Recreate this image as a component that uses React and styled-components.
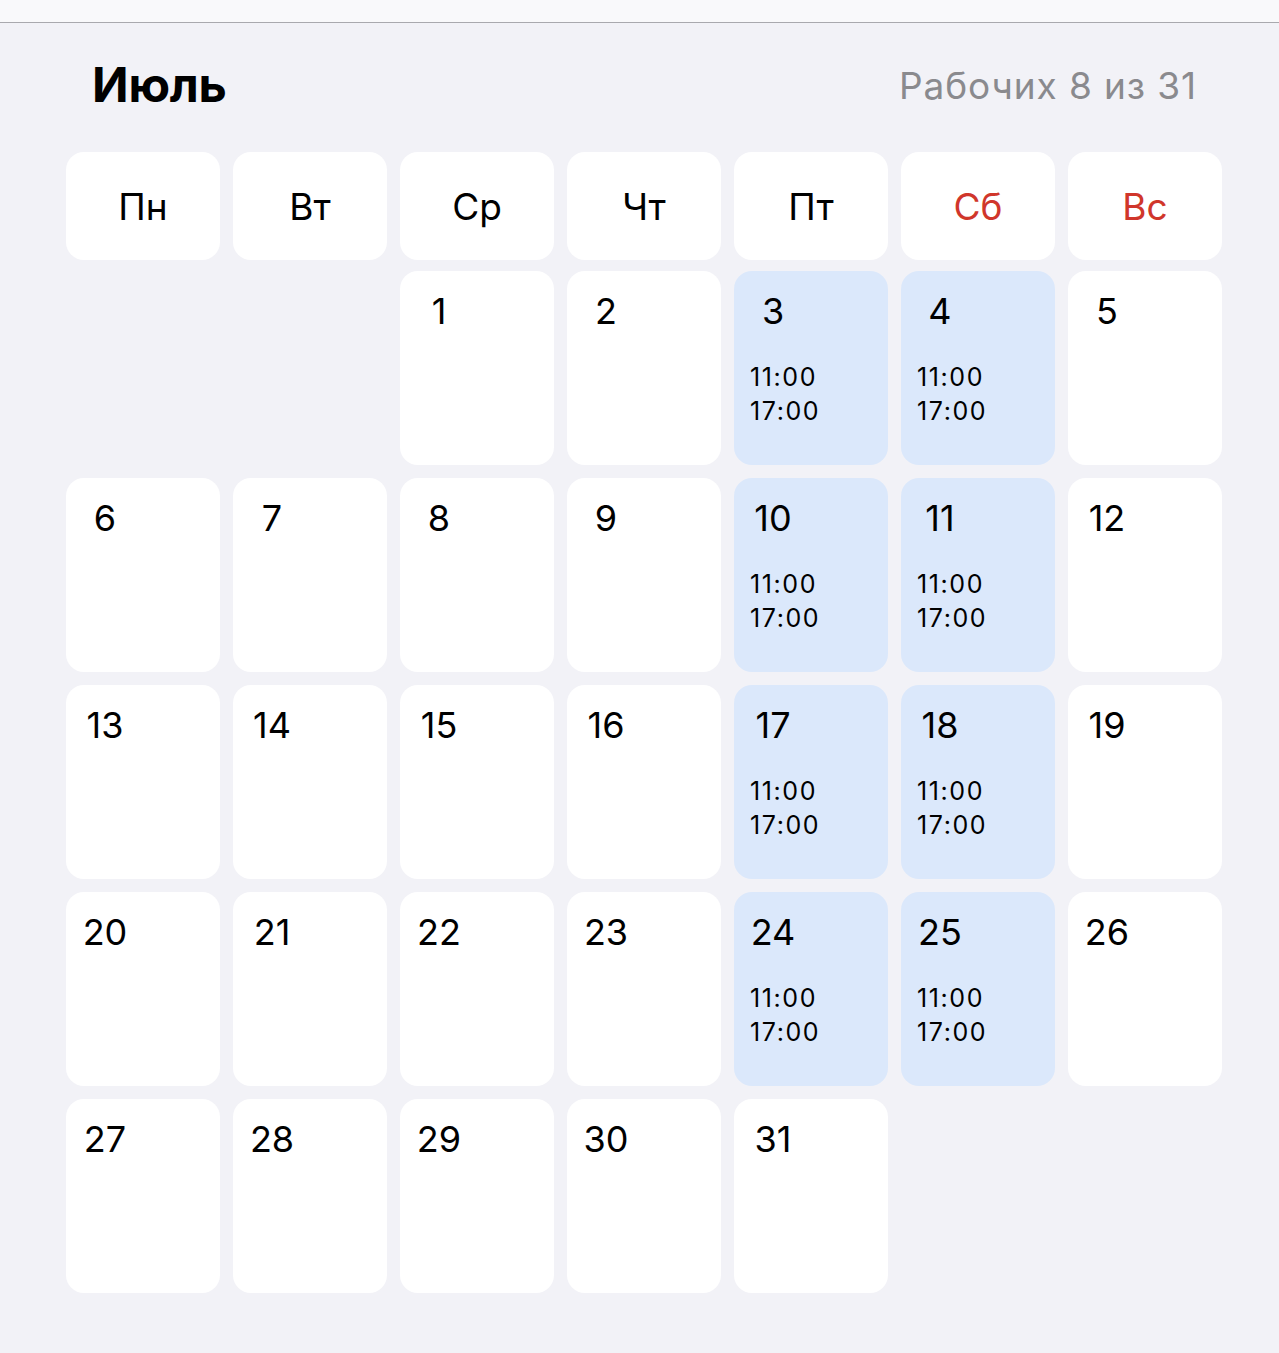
import React from "react";
import styled, { createGlobalStyle } from "styled-components";

const GlobalStyle = createGlobalStyle`
  body {
    margin: 0;
    background: #f2f2f7;
    font-family: Inter, "Liberation Sans", sans-serif;
    color: #000;
  }
`;

const WEEKDAYS = ["Пн", "Вт", "Ср", "Чт", "Пт", "Сб", "Вс"];
const WORK_DAYS = [3, 4, 10, 11, 17, 18, 24, 25];
const FIRST_OFFSET = 2; // июль начинается со среды
const DAYS_IN_MONTH = 31;

const TopBar = styled.div`
  height: 22px;
  background: #f9f9fb;
  border-bottom: 1px solid #a9a9ae;
`;

const Page = styled.div`
  padding: 33px 57px 60px 66px;
`;

const Header = styled.div`
  display: flex;
  justify-content: space-between;
  align-items: center;
  padding: 0 25px 0 26px;
  margin-bottom: 38px;
`;

const Title = styled.h1`
  margin: 0;
  font-size: 48px;
  line-height: 58px;
  font-weight: 700;
  letter-spacing: -0.2px;
`;

const Counter = styled.div`
  font-size: 37px;
  line-height: 45px;
  color: #8a8a8e;
  letter-spacing: 0.9px;
`;

const Grid = styled.div`
  display: grid;
  grid-template-columns: repeat(7, 154px);
  grid-auto-rows: 194px;
  column-gap: 13px;
  row-gap: 13px;
`;

const WeekRow = styled.div`
  display: grid;
  grid-template-columns: repeat(7, 154px);
  column-gap: 13px;
  margin-bottom: 11px;
`;

const WeekCell = styled.div`
  height: 108px;
  border-radius: 18px;
  background: #fff;
  display: flex;
  align-items: center;
  justify-content: center;
  font-size: 37px;
  color: ${(p) => (p.$weekend ? "#d0362b" : "#000")};
`;

const DayCell = styled.div`
  border-radius: 18px;
  background: ${(p) => (p.$work ? "#dbe8fb" : "#fff")};
  padding: 18px 14px 0;
  box-sizing: border-box;
`;

const DayNum = styled.div`
  width: 50px;
  text-align: center;
  font-size: 36px;
  line-height: 44px;
`;

const Times = styled.div`
  margin-top: 27px;
  padding-left: 2px;
  font-size: 25px;
  line-height: 34px;
  letter-spacing: 1.6px;
`;

const Empty = styled.div``;

export default function App() {
  const cells = [];
  for (let i = 0; i < FIRST_OFFSET; i++) cells.push(<Empty key={"e" + i} />);
  for (let d = 1; d <= DAYS_IN_MONTH; d++) {
    const work = WORK_DAYS.includes(d);
    cells.push(
      <DayCell key={d} $work={work}>
        <DayNum>{d}</DayNum>
        {work && (
          <Times>
            11:00
            <br />
            17:00
          </Times>
        )}
      </DayCell>
    );
  }

  return (
    <>
      <GlobalStyle />
      <TopBar />
      <Page>
        <Header>
          <Title>Июль</Title>
          <Counter>
            Рабочих {WORK_DAYS.length} из {DAYS_IN_MONTH}
          </Counter>
        </Header>
        <WeekRow>
          {WEEKDAYS.map((w, i) => (
            <WeekCell key={w} $weekend={i >= 5}>
              {w}
            </WeekCell>
          ))}
        </WeekRow>
        <Grid>{cells}</Grid>
      </Page>
    </>
  );
}
